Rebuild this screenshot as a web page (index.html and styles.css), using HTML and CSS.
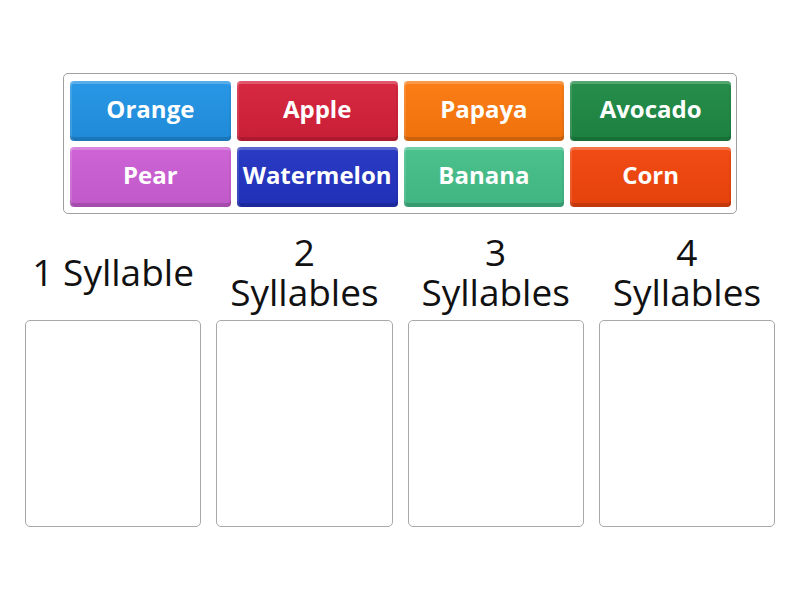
FILE: index.html
```html
<!DOCTYPE html>
<html>
<head>
<meta charset="utf-8">
<link rel="stylesheet" href="styles.css">
</head>
<body>
<div class="page">
  <div class="bank">
    <div class="tile blue">Orange</div>
    <div class="tile red">Apple</div>
    <div class="tile orange">Papaya</div>
    <div class="tile green">Avocado</div>
    <div class="tile purple">Pear</div>
    <div class="tile navy">Watermelon</div>
    <div class="tile mint">Banana</div>
    <div class="tile vermilion">Corn</div>
  </div>
  <div class="groups">
    <div class="group">
      <div class="title">1 Syllable</div>
      <div class="drop"></div>
    </div>
    <div class="group">
      <div class="title">2 Syllables</div>
      <div class="drop"></div>
    </div>
    <div class="group">
      <div class="title">3 Syllables</div>
      <div class="drop"></div>
    </div>
    <div class="group">
      <div class="title">4 Syllables</div>
      <div class="drop"></div>
    </div>
  </div>
</div>
</body>
</html>
```
FILE: styles.css
```css
html, body {
  margin: 0;
  padding: 0;
  background: #fff;
  font-family: "Open Sans", "Liberation Sans", sans-serif;
}
.page {
  width: 800px;
  height: 600px;
  padding-top: 73px;
  box-sizing: border-box;
}
.bank {
  margin-left: 63px;
  width: 674px;
  box-sizing: border-box;
  border: 1px solid #a0a0a0;
  border-radius: 5px;
  padding: 7px 5px 6px 6px;
  display: grid;
  grid-template-columns: repeat(4, 1fr);
  grid-auto-rows: 60px;
  gap: 6px;
}
.tile {
  border-radius: 4px;
  color: #fff;
  font-weight: 700;
  font-size: 24px;
  display: flex;
  align-items: center;
  justify-content: center;
  box-sizing: border-box;
  padding-bottom: 6px;
  white-space: nowrap;
  background-image: linear-gradient(to bottom, rgba(255,255,255,0.04), rgba(0,0,0,0.06));
  box-shadow:
    inset 0 3px 0 rgba(255,255,255,0.22),
    inset 2px 0 0 rgba(255,255,255,0.12),
    inset -2px 0 0 rgba(0,0,0,0.04),
    inset 0 -4px 0 rgba(0,0,0,0.14);
}
.blue { background-color: #2193e5; }
.red { background-color: #d5203a; }
.orange { background-color: #fc780d; }
.green { background-color: #1e8944; }
.purple { background-color: #cc5ed5; }
.navy { background-color: #2233c2; }
.mint { background-color: #44bf89; }
.vermilion { background-color: #f2450c; }

.groups {
  margin: 19px 0 0 25px;
  width: 750px;
  display: grid;
  grid-template-columns: repeat(4, 1fr);
  column-gap: 15px;
}
.group {
  display: flex;
  flex-direction: column;
}
.title {
  height: 80px;
  margin-bottom: 7px;
  display: flex;
  align-items: center;
  justify-content: center;
  text-align: center;
  font-size: 37px;
  line-height: 40px;
  color: #111;
  padding-bottom: 2px;
  box-sizing: border-box;
}
.drop {
  height: 205px;
  border: 1px solid #a8a8a8;
  border-radius: 5px;
}
```
